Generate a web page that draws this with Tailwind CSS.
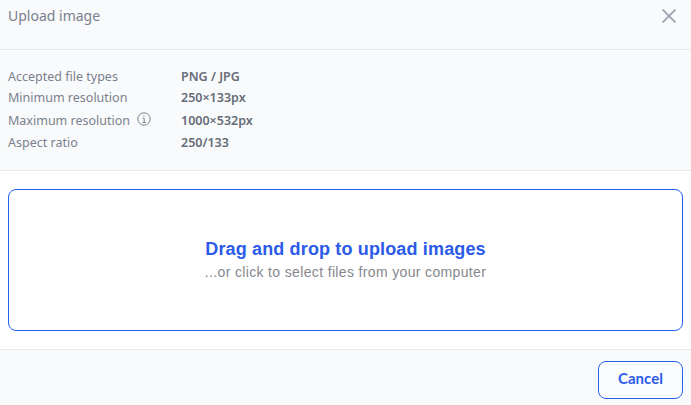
<!DOCTYPE html>
<html lang="en">
<head>
    <meta charset="UTF-8">
    <meta name="viewport" content="width=device-width, initial-scale=1">
    <title>Upload image</title>
    <script src="https://cdn.jsdelivr.net/npm/@tailwindcss/browser@4"></script>
</head>
<body class="h-[405px] w-[691px] overflow-hidden bg-white font-['Noto_Sans',sans-serif]">

<!-- Header -->
<header class="flex h-[50px] justify-between border-b border-[#e5e7eb] bg-[#f9fafc] pl-2 pr-[15px]">
    <h2 class="mt-[6px] text-[14px] leading-[20px] text-[#7a808c]">Upload image</h2>
    <button class="mt-[9px] h-[14px] w-[14px] text-[#9ca3af]">
        <svg viewBox="0 0 14 14" class="h-[14px] w-[14px]" fill="none" stroke="currentColor" stroke-width="1.8">
            <path d="M0.5 0.5L13.5 13.5M13.5 0.5L0.5 13.5"/>
        </svg>
    </button>
</header>

<!-- Requirements -->
<section class="h-[121px] border-b border-[#e5e7eb] bg-[#f9fafc] px-2 pt-[16px] text-[12.5px] leading-[21px] text-[#7a808c]">
    <div class="flex"><span class="w-[173px]">Accepted file types</span><span class="font-semibold text-[#666c78]">PNG / JPG</span></div>
    <div class="flex"><span class="w-[173px]">Minimum resolution</span><span class="font-semibold text-[#666c78]">250×133px</span></div>
    <div class="flex h-[24px] items-center">
        <span class="flex w-[173px] items-center gap-[7px]">
            Maximum resolution
            <svg viewBox="0 0 14 14" class="mb-[3px] h-[14px] w-[14px]" fill="none" stroke="currentColor" stroke-width="1">
                <circle cx="7" cy="7" r="6.2"/>
                <path d="M5.6 6.2H7.2V10.2M5.5 10.4H8.8M7 3.4V4.6"/>
            </svg>
        </span>
        <span class="font-semibold text-[#666c78]">1000×532px</span>
    </div>
    <div class="flex"><span class="w-[173px]">Aspect ratio</span><span class="font-semibold text-[#666c78]">250/133</span></div>
</section>

<!-- Dropzone -->
<section class="h-[179px] border-b border-[#e5e7eb] bg-white px-2 pt-[18px]">
    <div class="flex h-[142px] flex-col items-center justify-center gap-[2px] rounded-lg border border-[#2563eb] pb-[3px] font-['Liberation_Sans',sans-serif]">
        <p class="text-[18px] leading-[24px] font-bold tracking-[0.15px] text-[#2b5be8]">Drag and drop to upload images</p>
        <p class="text-[14px] leading-[18px] tracking-[0.35px] text-[#85888e]">...or click to select files from your computer</p>
    </div>
</section>

<!-- Footer -->
<footer class="flex h-[55px] justify-end bg-[#f9fafc] pt-[11px] pr-2">
    <button class="h-[38px] w-[85px] rounded-lg border border-[#2563eb] bg-white/40 pb-[3px] font-['Lato',sans-serif] text-[15px] font-bold text-[#2b5be8]">Cancel</button>
</footer>

</body>
</html>
